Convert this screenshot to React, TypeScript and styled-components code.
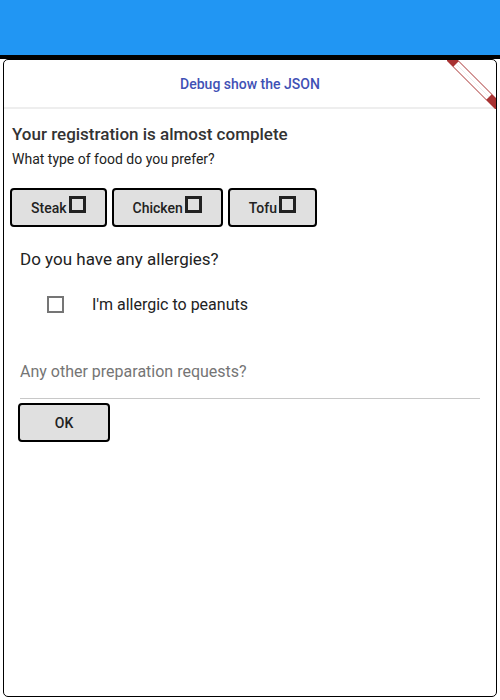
import styled, { createGlobalStyle } from "styled-components";

const GlobalStyle = createGlobalStyle`
  html, body {
    margin: 0;
    padding: 0;
    background: #ffffff;
  }

  body {
    font-family: Roboto, "Liberation Sans", sans-serif;
    color: #222;
  }
`;

const foods = ["Steak", "Chicken", "Tofu"];

const DebugRibbon = () => (
  <Ribbon width="50" height="50" viewBox="0 0 50 50">
    <polygon points="-2,0 10,0 50,40 50,52" fill="#a83232" />
    <polygon points="6.5,7.5 11.5,2.5 44.5,35.5 39.5,40.5" fill="#ffffff" />
    <line x1="9.5" y1="5.5" x2="42" y2="38" stroke="#eeeeee" strokeWidth="1" />
  </Ribbon>
);

export default function App() {
  return (
    <>
      <GlobalStyle />
      <AppBar />
      <Card>
        <DebugRibbon />
        <CardHeader>
          <DebugLink>Debug show the JSON</DebugLink>
        </CardHeader>
        <Body>
          <Title>Your registration is almost complete</Title>
          <Subtitle>What type of food do you prefer?</Subtitle>
          <ButtonRow>
            {foods.map((food) => (
              <FoodButton key={food}>
                {food}
                <Square />
              </FoodButton>
            ))}
          </ButtonRow>
          <Section>
            <Question>Do you have any allergies?</Question>
            <CheckRow>
              <CheckBox />
              <CheckLabel>I'm allergic to peanuts</CheckLabel>
            </CheckRow>
            <TextField>
              <Placeholder>Any other preparation requests?</Placeholder>
            </TextField>
          </Section>
          <OkButton>OK</OkButton>
        </Body>
      </Card>
    </>
  );
}

const AppBar = styled.div`
  height: 55px;
  background: #2196f3;
  border-bottom: 4px solid #000000;
`;

const Card = styled.div`
  position: relative;
  box-sizing: border-box;
  margin-left: 3px;
  width: 494px;
  height: 638px;
  border: 1px solid #000000;
  border-radius: 5px;
  overflow: hidden;
  background: #ffffff;
`;

const Ribbon = styled.svg`
  position: absolute;
  top: -1px;
  right: -1px;
  display: block;
`;

const CardHeader = styled.div`
  display: flex;
  align-items: center;
  justify-content: center;
  height: 47px;
  border-bottom: 2px solid #eeeeee;
`;

const DebugLink = styled.span`
  font-size: 14px;
  font-weight: 500;
  color: #3f51b5;
`;

const Body = styled.div`
  display: flex;
  flex-direction: column;
  align-items: flex-start;
  padding: 15px 8px 0 8px;
`;

const Title = styled.div`
  font-size: 17px;
  line-height: 20px;
  font-weight: 500;
  color: #333333;
`;

const Subtitle = styled.div`
  margin-top: 7px;
  font-size: 14px;
  line-height: 16px;
  color: #222222;
`;

const ButtonRow = styled.div`
  display: flex;
  gap: 5px;
  margin: 21px 0 0 -2px;
`;

const FoodButton = styled.button`
  display: flex;
  align-items: center;
  gap: 2px;
  box-sizing: border-box;
  height: 39px;
  padding: 0 19px;
  border: 2px solid #000000;
  border-radius: 4px;
  background: #e0e0e0;
  font-family: inherit;
  font-size: 14px;
  font-weight: 500;
  color: #222222;
`;

const Square = styled.span`
  display: block;
  box-sizing: border-box;
  width: 17px;
  height: 17px;
  margin-top: -6px;
  border: 3px solid #222222;
`;

const Section = styled.div`
  align-self: stretch;
  display: flex;
  flex-direction: column;
  padding: 0 8px;
`;

const Question = styled.div`
  margin-top: 22px;
  font-size: 17px;
  line-height: 20px;
  color: #222222;
`;

const CheckRow = styled.div`
  display: flex;
  align-items: center;
  height: 40px;
  margin-top: 15px;
  padding-left: 27px;
`;

const CheckBox = styled.span`
  box-sizing: border-box;
  width: 17px;
  height: 17px;
  border: 2px solid #757575;
`;

const CheckLabel = styled.span`
  margin-left: 28px;
  font-size: 16px;
  color: #222222;
`;

const TextField = styled.div`
  display: flex;
  align-items: center;
  height: 54px;
  margin-top: 20px;
  border-bottom: 1px solid #c8c8c8;
`;

const Placeholder = styled.span`
  font-size: 16px;
  color: #757575;
`;

const OkButton = styled.button`
  box-sizing: border-box;
  width: 92px;
  height: 39px;
  margin: 4px 0 0 6px;
  border: 2px solid #000000;
  border-radius: 4px;
  background: #e0e0e0;
  font-family: inherit;
  font-size: 14px;
  font-weight: 500;
  color: #222222;
`;
